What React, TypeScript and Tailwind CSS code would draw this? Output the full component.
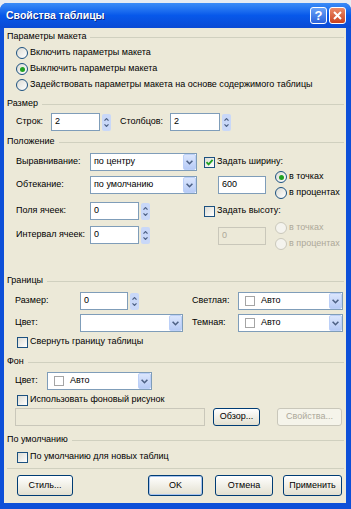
import type { ReactNode } from "react";

function Heading({ title, className = "" }: { title: string; className?: string }) {
  return (
    <div className={`flex items-center h-[16px] pl-[3px] pr-[2px] ${className}`}>
      <span className="whitespace-nowrap">{title}</span>
      <div className="flex-1 h-px bg-[#d0d0bf] ml-[4px]" />
    </div>
  );
}

function Radio({ label, checked = false, disabled = false }: { label: string; checked?: boolean; disabled?: boolean }) {
  return (
    <div className="flex items-center h-[16px]">
      <span
        className={`w-[12px] h-[12px] rounded-full border flex items-center justify-center ${
          disabled ? "border-[#cac8bb] bg-[#f4f3ee]" : "border-[#1c5180] bg-linear-to-br from-[#dcdcd5] to-white"
        }`}
      >
        {checked && <span className="w-[5px] h-[5px] rounded-full bg-[#21a121]" />}
      </span>
      <span className={`ml-[2px] whitespace-nowrap ${disabled ? "text-[#aca899]" : ""}`}>{label}</span>
    </div>
  );
}

function Checkbox({ label, checked = false }: { label: string; checked?: boolean }) {
  return (
    <div className="flex items-center h-[16px]">
      <span className="w-[11px] h-[11px] border border-[#1c5180] bg-linear-to-br from-[#dcdcd5] to-white flex items-center justify-center">
        {checked && (
          <svg width="9" height="9" viewBox="0 0 9 9">
            <path d="M1.5 4.2 L3.6 6.4 L7.6 1.8" stroke="#21a121" strokeWidth="1.8" fill="none" />
          </svg>
        )}
      </span>
      <span className="ml-[2px] whitespace-nowrap">{label}</span>
    </div>
  );
}

function Field({ value, width, disabled = false }: { value: string; width: string; disabled?: boolean }) {
  return (
    <div
      className={`${width} h-[18px] border flex items-center px-[3px] ${
        disabled ? "border-[#c9c7ba] bg-[#ece9d8] text-[#aca899]" : "border-[#7f9db9] bg-white"
      }`}
    >
      {value}
    </div>
  );
}

function Spin() {
  return (
    <div className="w-[9px] h-[17px] ml-[2px] rounded-[2px] bg-[#c9d8f8] flex flex-col items-center justify-center gap-[3px]">
      <svg width="5" height="3" viewBox="0 0 5 3">
        <path d="M0.5 2.6 L2.5 0.6 L4.5 2.6" stroke="#4d6185" strokeWidth="1.2" fill="none" />
      </svg>
      <svg width="5" height="3" viewBox="0 0 5 3">
        <path d="M0.5 0.4 L2.5 2.4 L4.5 0.4" stroke="#4d6185" strokeWidth="1.2" fill="none" />
      </svg>
    </div>
  );
}

function Select({ width, children }: { width: string; children?: ReactNode }) {
  return (
    <div className={`${width} h-[18px] border border-[#7f9db9] bg-white flex items-center`}>
      <div className="flex-1 flex items-center pl-[3px] whitespace-nowrap">{children}</div>
      <div className="w-[13px] h-[16px] rounded-[2px] border border-[#bcd0f8] bg-linear-to-b from-[#dbe6fd] to-[#b7cbf6] flex items-center justify-center">
        <svg width="7" height="5" viewBox="0 0 7 5">
          <path d="M0.6 0.8 L3.5 3.7 L6.4 0.8" stroke="#4d6185" strokeWidth="1.6" fill="none" />
        </svg>
      </div>
    </div>
  );
}

function ColorSelect({ width }: { width: string }) {
  return (
    <Select width={width}>
      <span className="w-[10px] h-[10px] border border-[#a5a5a5] bg-white ml-[3px]" />
      <span className="ml-[6px]">Авто</span>
    </Select>
  );
}

function Button({ label, width, disabled = false, isDefault = false }: { label: string; width: string; disabled?: boolean; isDefault?: boolean }) {
  return (
    <div
      className={`${width} h-full rounded-[3px] border flex items-center justify-center whitespace-nowrap ${
        disabled
          ? "border-[#c9c7ba] bg-[#f5f4ea] text-[#aca899]"
          : "border-[#003c74] bg-linear-to-b from-white to-[#e3e0d0]"
      } ${isDefault ? "shadow-[inset_0_0_0_1px_#a8c4ee]" : ""}`}
    >
      {label}
    </div>
  );
}

export default function App() {
  return (
    <div className="w-[351px] h-[509px] flex flex-col bg-[#e8ecf2] font-['Liberation_Sans',Arial,sans-serif] text-[9px] text-black">
      <div className="h-[3px]" />
      <div className="flex-1 flex flex-col rounded-t-[7px] bg-[#0d4fd8]">
        <div className="h-[25px] rounded-t-[7px] bg-linear-to-b from-[#3b8cf7] via-[#0758ea] to-[#0a4ad4] flex items-center pl-[6px] pr-[5px]">
          <span className="text-white font-bold text-[10.5px] [text-shadow:1px_1px_#0a2a8a]">Свойства таблицы</span>
          <div className="ml-auto flex items-center gap-[2px]">
            <div className="w-[17px] h-[17px] rounded-[3px] border border-white bg-linear-to-b from-[#6aa2f7] to-[#2b62dc] flex items-center justify-center text-white font-bold text-[13px] leading-none">
              ?
            </div>
            <div className="w-[17px] h-[17px] rounded-[3px] border border-white bg-linear-to-b from-[#ec8a68] to-[#c9411c] flex items-center justify-center">
              <svg width="9" height="9" viewBox="0 0 9 9">
                <path d="M1 1 L8 8 M8 1 L1 8" stroke="white" strokeWidth="2" />
              </svg>
            </div>
          </div>
        </div>

        <div className="flex-1 ml-[4px] mr-[5px] mb-[6px] bg-[#ece9d8] flex flex-col">
          <Heading title="Параметры макета" className="mt-[1px]" />
          <div className="pl-[12px]">
            <Radio label="Включить параметры макета" />
            <Radio label="Выключить параметры макета" checked />
            <Radio label="Задействовать параметры макета на основе содержимого таблицы" />
          </div>

          <Heading title="Размер" className="mt-[3px]" />
          <div className="h-[20px] flex items-center pl-[12px]">
            <span className="w-[35px] whitespace-nowrap">Строк:</span>
            <Field value="2" width="w-[49px]" />
            <Spin />
            <span className="w-[50px] ml-[9px] whitespace-nowrap">Столбцов:</span>
            <Field value="2" width="w-[50px]" />
            <Spin />
          </div>

          <Heading title="Положение" className="mt-[2px]" />
          <div className="mt-[2px] flex items-start">
            <div className="w-[200px] pl-[12px] flex flex-col">
              <div className="h-[20px] flex items-center">
                <span className="w-[74px] whitespace-nowrap">Выравнивание:</span>
                <Select width="w-[107px]">по центру</Select>
              </div>
              <div className="mt-[3px] h-[20px] flex items-center">
                <span className="w-[74px] whitespace-nowrap">Обтекание:</span>
                <Select width="w-[107px]">по умолчанию</Select>
              </div>
              <div className="mt-[6px] h-[20px] flex items-center">
                <span className="w-[74px] whitespace-nowrap">Поля ячеек:</span>
                <Field value="0" width="w-[49px]" />
                <Spin />
              </div>
              <div className="mt-[4px] h-[20px] flex items-center">
                <span className="w-[74px] whitespace-nowrap">Интервал ячеек:</span>
                <Field value="0" width="w-[49px]" />
                <Spin />
              </div>
            </div>
            <div className="flex-1 flex flex-col">
              <div className="h-[20px] flex items-center">
                <Checkbox label="Задать ширину:" checked />
              </div>
              <div className="mt-[-3px] h-[32px] flex items-center">
                <div className="ml-[14px]">
                  <Field value="600" width="w-[48px]" />
                </div>
                <div className="ml-[9px] flex flex-col">
                  <Radio label="в точках" checked />
                  <Radio label="в процентах" />
                </div>
              </div>
              <div className="mt-[2px]">
                <Checkbox label="Задать высоту:" />
              </div>
              <div className="mt-[1px] h-[32px] flex items-center">
                <div className="ml-[14px]">
                  <Field value="0" width="w-[48px]" disabled />
                </div>
                <div className="ml-[9px] flex flex-col">
                  <Radio label="в точках" disabled />
                  <Radio label="в процентах" disabled />
                </div>
              </div>
            </div>
          </div>

          <Heading title="Границы" className="mt-[21px]" />
          <div className="mt-[2px] h-[20px] flex items-center pl-[11px]">
            <div className="w-[177px] flex items-center">
              <span className="w-[65px]">Размер:</span>
              <Field value="0" width="w-[48px]" />
              <Spin />
            </div>
            <span className="w-[46px]">Светлая:</span>
            <ColorSelect width="w-[105px]" />
          </div>
          <div className="mt-[2px] h-[20px] flex items-center pl-[11px]">
            <div className="w-[177px] flex items-center">
              <span className="w-[65px]">Цвет:</span>
              <Select width="w-[103px]" />
            </div>
            <span className="w-[46px]">Темная:</span>
            <ColorSelect width="w-[105px]" />
          </div>
          <div className="mt-[1px] pl-[13px]">
            <Checkbox label="Свернуть границу таблицы" />
          </div>

          <Heading title="Фон" className="mt-[4px]" />
          <div className="mt-[1px] h-[20px] flex items-center pl-[11px]">
            <span className="w-[32px]">Цвет:</span>
            <ColorSelect width="w-[105px]" />
          </div>
          <div className="mt-[1px] pl-[13px]">
            <Checkbox label="Использовать фоновый рисунок" />
          </div>
          <div className="h-[18px] flex items-center pl-[11px]">
            <Field value="" width="w-[190px]" disabled />
            <div className="ml-[8px] h-[18px] flex">
              <Button label="Обзор..." width="w-[47px]" />
            </div>
            <div className="ml-[17px] h-[18px] flex">
              <Button label="Свойства..." width="w-[65px]" disabled />
            </div>
          </div>

          <Heading title="По умолчанию" className="mt-[6px]" />
          <div className="mt-[1px] pl-[13px]">
            <Checkbox label="По умолчанию для новых таблиц" />
          </div>
          <div className="mt-[3px] h-px ml-[3px] mr-[2px] bg-[#d0d0bf]" />

          <div className="mt-[6px] h-[21px] flex pl-[13px]">
            <Button label="Стиль..." width="w-[56px]" />
            <div className="ml-[75px] flex">
              <Button label="OK" width="w-[55px]" isDefault />
            </div>
            <div className="ml-[12px] flex">
              <Button label="Отмена" width="w-[58px]" />
            </div>
            <div className="ml-[10px] flex">
              <Button label="Применить" width="w-[59px]" />
            </div>
          </div>
        </div>
      </div>
    </div>
  );
}
